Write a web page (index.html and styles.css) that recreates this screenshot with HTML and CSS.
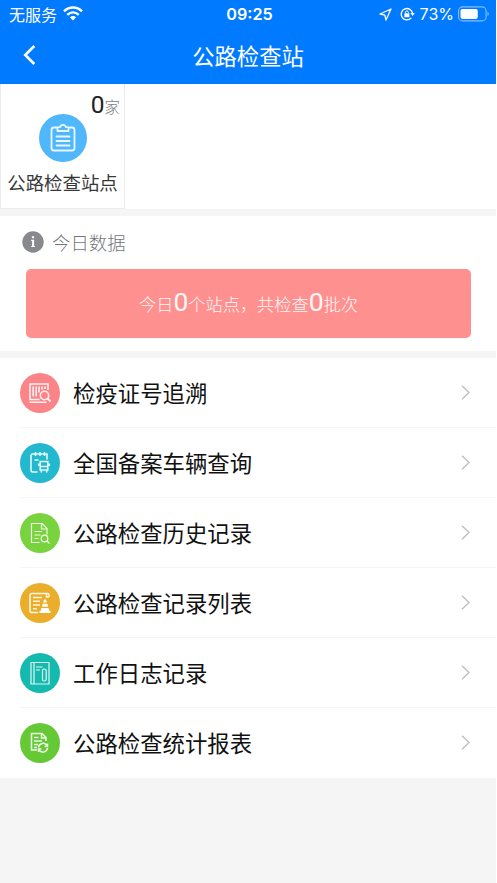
FILE: index.html
```
<!DOCTYPE html>
<html lang="zh-CN">
<head>
<meta charset="utf-8">
<title>公路检查站</title>
<link rel="stylesheet" href="styles.css">
</head>
<body>
<div class="app">
  <header class="header">
    <div class="status">
      <div class="status-left">
        <span class="carrier">无服务</span>
        <svg class="wifi" width="20" height="15" viewBox="0 0 20 15" fill="none" stroke="#fff" stroke-width="2.5"><path d="M1 5.3C6.2.2 13.8.2 19 5.3M4.200 8.800c3.500-3.200 8.100-3.200 11.600 0"/><path d="M10 14.500l-3.100-3.200c1.800-1.700 4.400-1.700 6.200 0z" fill="#fff" stroke="none"/></svg>
      </div>
      <span class="clock">09:25</span>
      <div class="status-right">
        <svg class="locate" width="13" height="13" viewBox="0 0 13 13" fill="none" stroke="#fff" stroke-width="1.3" stroke-linejoin="round"><path d="M12 1L1 6l4.800 1.200L7 12z"/></svg>
        <svg class="rotation" width="15" height="14" viewBox="0 0 15 14" fill="none" stroke="#fff" stroke-width="1.300"><path d="M11.300 10.900A5.700 5.700 0 1 1 12.600 6.500"/><path d="M10.400 6h4.400l-2.200 2.900z" fill="#fff" stroke="none"/><path d="M4.400 6.300h5v3.900h-5z" fill="#fff" stroke="none"/><path d="M5.500 6.500V5.300a1.400 1.400 0 0 1 2.800 0v1.200" stroke-width="1"/></svg>
        <span class="percent">73%</span>
        <svg class="battery" width="32" height="16" viewBox="0 0 32 16"><rect x=".6" y=".9" width="27.500" height="14" rx="4" fill="none" stroke="#84bfff" stroke-width="1.100"/><rect x="2.500" y="2.900" width="17.300" height="10" rx="2" fill="#fff"/><path d="M29.500 5.800c1.800.8 1.800 3.500 0 4.300z" fill="#84bfff"/></svg>
      </div>
    </div>
    <nav class="nav">
      <svg class="back" width="13" height="20" viewBox="0 0 13 20" fill="none" stroke="#fff" stroke-width="2.600"><path d="M11.300 1L2.200 10l9.100 9"/></svg>
      <h1 class="title">公路检查站</h1>
    </nav>
  </header>

  <section class="stations">
    <div class="station">
      <div class="count"><b class="count-num">0</b>家</div>
      <svg class="station-icon" width="48" height="48" viewBox="0 0 48 48" fill="none" stroke="#e9f8ff" stroke-width="1.800" stroke-linejoin="round" stroke-linecap="round"><circle cx="24" cy="24" r="24" fill="#50b7fa" stroke="none"/><path d="M18 13.500h-3a2.500 2.500 0 0 0-2.500 2.500v18a2.500 2.500 0 0 0 2.500 2.500h18a2.500 2.500 0 0 0 2.500-2.500V16a2.500 2.500 0 0 0-2.500-2.500h-3"/><path d="M18.500 17v-3.500l2.800-.7c.5-2.500 4.900-2.500 5.400 0l2.800.7V17z"/><path d="M17.500 22.500h13M17.500 27h13M17.500 31.500h13"/></svg>
      <div class="station-name">公路检查站点</div>
    </div>
  </section>

  <section class="today">
    <h2 class="today-head">
      <svg width="22" height="22" viewBox="0 0 22 22"><circle cx="11" cy="11" r="10.700" fill="#88898d"/><path d="M9.900 5.200h2.200v2H9.900zM9.200 8.800h2.900v6.100h.8V16H9.200v-1.100h.9v-5h-.9z" fill="#fff"/></svg>
      <span>今日数据</span>
    </h2>
    <div class="banner"><p>今日<span class="big">0</span>个站点，共检查<span class="big">0</span>批次</p></div>
  </section>

  <ul class="menu">
    <li class="row">
      <svg class="icon" viewBox="0 0 40 40"><circle cx="20" cy="20" r="20" fill="#fb8489"/><path d="M28 17v-6H10v15.500h9.500M9.500 29.300h17M13.200 13.500v10M16.200 13.500v10M19 13.500v6M22 13.500v3M25 13.500v2.500"/><circle cx="24.500" cy="22.500" r="4.200"/><path d="M27.500 25.500l3 3" stroke-width="2"/></svg>
      <span class="label">检疫证号追溯</span>
      <svg class="chevron" viewBox="0 0 9 15"><path d="M1 .8l7 6.700-7 6.700"/></svg>
    </li>
    <li class="row">
      <svg class="icon" viewBox="0 0 40 40"><circle cx="20" cy="20" r="20" fill="#22b8ce"/><path d="M17.500 29h-5a1.500 1.500 0 0 1-1.500-1.500v-15a1.500 1.500 0 0 1 1.500-1.500H27v5.500M15.500 9v4M20 9v4M24.500 9v4M14.500 17h4"/><path d="M20.200 18.500h7.600v8.500h-7.600zM20 23.500h8M18.700 20.500v2.500M29.300 20.500v2.500M21.300 27v2.500M26.700 27v2.500"/></svg>
      <span class="label">全国备案车辆查询</span>
      <svg class="chevron" viewBox="0 0 9 15"><path d="M1 .8l7 6.700-7 6.700"/></svg>
    </li>
    <li class="row">
      <svg class="icon thin" viewBox="0 0 40 40"><circle cx="20" cy="20" r="20" fill="#79d33e"/><path d="M19.500 29.500h-8v-19H22l5 5v6M21.500 10.500V16H27M14.500 18.500h7.500M14.500 22h6M14.500 25.500h4"/><circle cx="24.500" cy="25.500" r="3.300"/><path d="M27 28l2.500 2.500"/></svg>
      <span class="label">公路检查历史记录</span>
      <svg class="chevron" viewBox="0 0 9 15"><path d="M1 .8l7 6.700-7 6.700"/></svg>
    </li>
    <li class="row">
      <svg class="icon" viewBox="0 0 40 40"><circle cx="20" cy="20" r="20" fill="#ebae2b"/><path d="M29 14v-2a1.500 1.500 0 0 0-1.500-1.500H12a2 2 0 0 0-2 2V28a1.500 1.500 0 0 0 1.500 1.500H18M26.500 11v3H29M13 14.500h9M13 18.300h7M13 22h7M13 25.800h4"/><path class="solid" d="M24 16.500h2l.8 3h-3.600zM22.700 20.700h4.600l.8 3h-6.200zM21.500 25h7l.8 2.700h1.200V30h-11v-2.300h1.200z"/></svg>
      <span class="label">公路检查记录列表</span>
      <svg class="chevron" viewBox="0 0 9 15"><path d="M1 .8l7 6.700-7 6.700"/></svg>
    </li>
    <li class="row">
      <svg class="icon thin" viewBox="0 0 40 40"><circle cx="20" cy="20" r="20" fill="#14baae"/><path d="M11 9.500h18V31H11zM14 9.500V31M16 14h6.500M16 17h4"/><rect x="22.500" y="16" width="3.700" height="12" rx="1.800"/></svg>
      <span class="label">工作日志记录</span>
      <svg class="chevron" viewBox="0 0 9 15"><path d="M1 .8l7 6.700-7 6.700"/></svg>
    </li>
    <li class="row">
      <svg class="icon" viewBox="0 0 40 40"><circle cx="20" cy="20" r="20" fill="#64c934"/><path d="M17 27h-5.500V10.500H22l4 4V18M21.500 10.500V15H26M14 14.500h4.500M14 18h8M14 21.500h4M14 24.500h3"/><path d="M18.500 24.500a4.500 4.500 0 0 1 7.500-3l1.500 2M27.500 20.500v3H24.500M27.500 25a4.500 4.500 0 0 1-7.700 2.700l-1.300-1.500M18.500 29v-3h3"/></svg>
      <span class="label">公路检查统计报表</span>
      <svg class="chevron" viewBox="0 0 9 15"><path d="M1 .8l7 6.700-7 6.700"/></svg>
    </li>
  </ul>
</div>
</body>
</html>
```
FILE: styles.css
```
* { box-sizing: border-box; }
body {
  margin: 0;
  background: #fff;
  font-family: "Noto Sans CJK SC", sans-serif;
}
.app {
  width: 496px;
  min-height: 883px;
  background: #f5f5f5;
}
.header {
  height: 84px;
  background: #007aff;
  color: #fff;
}
.status {
  display: grid;
  grid-template-columns: 1fr auto 1fr;
  align-items: center;
  height: 28px;
  padding: 0 6px 0 9px;
}
.status-left, .status-right {
  display: flex;
  align-items: center;
}
.carrier {
  font-size: 16px;
  line-height: 24px;
}
.wifi { margin: 0 0 2px 6px; }
.clock {
  font: 600 16.200px/24px Inter, sans-serif;
}
.status-right { justify-content: flex-end; }
.rotation { margin-left: 8px; }
.percent {
  margin: 0 4px 0 5px;
  font: 400 16px/24px Inter, sans-serif;
}
.nav {
  display: grid;
  grid-template-columns: 60px 1fr 60px;
  align-items: center;
  height: 54px;
}
.back { margin-left: 23px; }
.title {
  margin: 0;
  font-size: 22.300px;
  font-weight: 400;
  line-height: 32px;
  text-align: center;
}
.stations {
  height: 125px;
  background: #fff;
}
.station {
  display: flex;
  flex-direction: column;
  align-items: center;
  width: 125px;
  height: 125px;
  border: 1px solid #ececec;
  border-top: 0;
}
.count {
  align-self: flex-end;
  height: 30px;
  padding: 6px 4px 0 0;
  color: #7c7d81;
  font-size: 15.500px;
  font-weight: 300;
  line-height: 30px;
}
.count-num {
  color: #222;
  font: 400 24.500px/30px Roboto, sans-serif;
}
.station-icon { flex: none; }
.station-name {
  margin-top: 7px;
  color: #383838;
  font-size: 18.400px;
  line-height: 27px;
  white-space: nowrap;
}
.today {
  height: 135px;
  margin-top: 7px;
  padding: 12px 26px 0;
  background: #fff;
}
.today-head {
  display: flex;
  align-items: center;
  gap: 8px;
  height: 28px;
  margin: 0 0 0 -4px;
  color: #747579;
  font-size: 18.400px;
  font-weight: 300;
}
.banner {
  display: flex;
  align-items: center;
  justify-content: center;
  height: 69px;
  margin: 12.500px -1px 0 0;
  border-radius: 5px;
  background: #ff9090;
  color: #fff8f6;
  font-size: 17.200px;
  font-weight: 300;
}
.banner p {
  margin: 0;
  line-height: 36px;
  white-space: nowrap;
}
.big {
  font: 400 26.500px/36px Roboto, sans-serif;
}
.menu {
  margin: 7px 0 0;
  padding: 0;
  background: #fff;
  list-style: none;
}
.row {
  display: flex;
  align-items: center;
  height: 70px;
  margin-left: 20px;
  padding-right: 26px;
  border-bottom: 1px solid #f5f5f5;
}
.row:last-child { border-bottom-color: transparent; }
.icon {
  width: 40px;
  height: 40px;
  fill: none;
  stroke: #fff;
  stroke-opacity: .88;
  stroke-width: 1.600;
}
.icon circle:first-child { stroke: none; }
.thin { stroke-width: 1.200; }
.solid {
  fill: #fff;
  stroke: none;
}
.label {
  flex: 1;
  margin: 0 0 1px 13px;
  color: #111;
  font-size: 22.400px;
  line-height: 34px;
}
.chevron {
  width: 9px;
  height: 15px;
  fill: none;
  stroke: #c0c0c4;
  stroke-width: 1.500;
}
```
